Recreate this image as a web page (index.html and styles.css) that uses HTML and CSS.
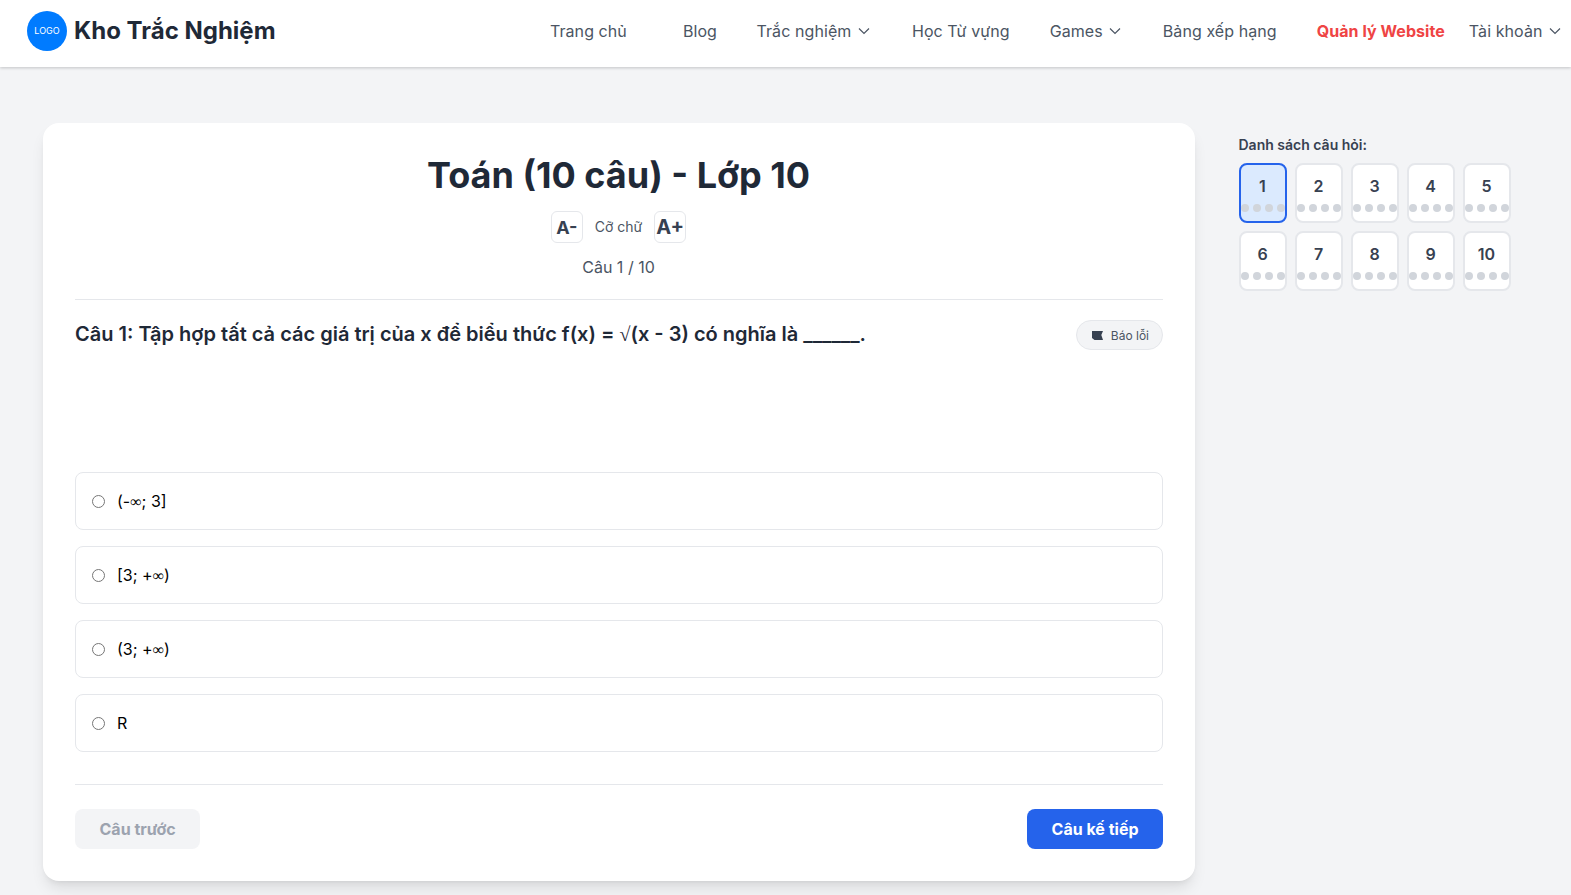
FILE: index.html
```html
<!DOCTYPE html>
<html lang="vi">
<head>
    <meta charset="UTF-8">
    <meta name="viewport" content="width=device-width, initial-scale=1.0">
    <title>Kho Trắc Nghiệm</title>
    <link rel="stylesheet" href="styles.css">
</head>
<body>
    <header class="site-header">
        <a class="brand" href="#">
            <span class="brand-logo">LOGO</span>
            <span class="brand-name">Kho Trắc Nghiệm</span>
        </a>
        <nav class="main-nav">
            <a class="nav-link nav-home" href="#">Trang chủ</a>
            <a class="nav-link nav-blog" href="#">Blog</a>
            <a class="nav-link nav-quiz" href="#">Trắc nghiệm
                <svg class="chevron" viewBox="0 0 12 12"><path d="M1 3.500l5 5 5-5"/></svg>
            </a>
            <a class="nav-link nav-vocab" href="#">Học Từ vựng</a>
            <a class="nav-link nav-games" href="#">Games
                <svg class="chevron" viewBox="0 0 12 12"><path d="M1 3.500l5 5 5-5"/></svg>
            </a>
            <a class="nav-link nav-rank" href="#">Bảng xếp hạng</a>
            <a class="nav-link nav-admin" href="#">Quản lý Website</a>
            <a class="nav-link nav-account" href="#">Tài khoản
                <svg class="chevron" viewBox="0 0 12 12"><path d="M1 3.500l5 5 5-5"/></svg>
            </a>
        </nav>
    </header>

    <main class="page">
        <section class="quiz-card">
            <h1 class="quiz-title">Toán (10 câu) - Lớp 10</h1>
            <div class="font-controls">
                <button class="font-btn font-smaller">A-</button>
                <span class="font-label">Cỡ chữ</span>
                <button class="font-btn font-bigger">A+</button>
            </div>
            <div class="quiz-progress">Câu 1 / 10</div>

            <div class="question-row">
                <div class="question-text">Câu 1: Tập hợp tất cả các giá trị của x để biểu thức f(x) = <span class="math">√</span>(x - 3) có nghĩa là ______.</div>
                <button class="report-btn">
                    <svg class="flag-icon" viewBox="0 0 11 9"><path d="M0 0h11L9.300 4 11 9H2.500L0 7z"/></svg>
                    Báo lỗi
                </button>
            </div>

            <div class="answers">
                <label class="answer"><input type="radio" name="q1"><span>(-<span class="math">∞</span>; 3]</span></label>
                <label class="answer"><input type="radio" name="q1"><span>[3; +<span class="math">∞</span>)</span></label>
                <label class="answer"><input type="radio" name="q1"><span>(3; +<span class="math">∞</span>)</span></label>
                <label class="answer"><input type="radio" name="q1"><span>R</span></label>
            </div>

            <div class="quiz-footer">
                <button class="btn btn-prev">Câu trước</button>
                <button class="btn btn-next">Câu kế tiếp</button>
            </div>
        </section>

        <aside class="question-panel">
            <div class="panel-title">Danh sách câu hỏi:</div>
            <div class="question-grid">
                <div class="q-tile active"><span class="q-num">1</span><div class="q-dots"><i></i><i></i><i></i><i></i></div></div>
                <div class="q-tile"><span class="q-num">2</span><div class="q-dots"><i></i><i></i><i></i><i></i></div></div>
                <div class="q-tile"><span class="q-num">3</span><div class="q-dots"><i></i><i></i><i></i><i></i></div></div>
                <div class="q-tile"><span class="q-num">4</span><div class="q-dots"><i></i><i></i><i></i><i></i></div></div>
                <div class="q-tile"><span class="q-num">5</span><div class="q-dots"><i></i><i></i><i></i><i></i></div></div>
                <div class="q-tile"><span class="q-num">6</span><div class="q-dots"><i></i><i></i><i></i><i></i></div></div>
                <div class="q-tile"><span class="q-num">7</span><div class="q-dots"><i></i><i></i><i></i><i></i></div></div>
                <div class="q-tile"><span class="q-num">8</span><div class="q-dots"><i></i><i></i><i></i><i></i></div></div>
                <div class="q-tile"><span class="q-num">9</span><div class="q-dots"><i></i><i></i><i></i><i></i></div></div>
                <div class="q-tile"><span class="q-num">10</span><div class="q-dots"><i></i><i></i><i></i><i></i></div></div>
            </div>
        </aside>
    </main>
</body>
</html>
```

FILE: styles.css
```css
* {
    box-sizing: border-box;
    margin: 0;
    padding: 0;
}

body {
    background-color: #f3f4f6;
    font-family: 'Inter', 'Liberation Sans', sans-serif;
    color: #1f2937;
}

a {
    text-decoration: none;
}

button {
    font-family: inherit;
    cursor: pointer;
}

.site-header {
    height: 67px;
    background-color: #fff;
    box-shadow: 0 1px 3px rgba(0, 0, 0, 0.2);
    display: flex;
    justify-content: space-between;
    align-items: center;
    padding: 0 10px 6px 27px;
}

.brand {
    display: flex;
    align-items: center;
    gap: 7px;
}

.brand-logo {
    width: 40px;
    height: 40px;
    border-radius: 50%;
    background-color: #007bff;
    color: #fff;
    font-size: 9px;
    display: flex;
    align-items: center;
    justify-content: center;
}

.brand-name {
    font-size: 24px;
    font-weight: 700;
    color: #1f2937;
}

.main-nav {
    display: flex;
    align-items: center;
}

.nav-link {
    font-size: 16px;
    letter-spacing: 0.08px;
    color: #4b5563;
    display: flex;
    align-items: center;
    gap: 6.500px;
}

.nav-home { margin-right: 56px; }
.nav-blog { margin-right: 39.500px; }
.nav-quiz { margin-right: 42px; }
.nav-vocab { margin-right: 40px; }
.nav-games { margin-right: 41.500px; }
.nav-rank { margin-right: 40px; }
.nav-admin { margin-right: 24px; color: #ef4444; font-weight: 700; letter-spacing: 0.05px; }

.chevron {
    width: 12px;
    height: 12px;
    fill: none;
    stroke: #4b5563;
    stroke-width: 1.200;
}

.page {
    display: flex;
    align-items: flex-start;
    gap: 43px;
    padding: 56px 0 15px 43px;
}

.quiz-card {
    width: 1152px;
    height: 758px;
    background-color: #fff;
    border-radius: 16px;
    padding: 32px;
    box-shadow: 0 10px 15px -3px rgba(0, 0, 0, 0.1), 0 4px 6px -4px rgba(0, 0, 0, 0.1);
    display: flex;
    flex-direction: column;
}

.quiz-title {
    font-size: 36px;
    line-height: 40px;
    font-weight: 700;
    color: #1f2937;
    text-align: center;
    padding-right: 1px;
}

.font-controls {
    display: flex;
    justify-content: center;
    align-items: center;
    gap: 12px;
    margin-top: 16px;
    padding-right: 1px;
}

.font-btn {
    width: 32px;
    height: 32px;
    background-color: #fff;
    border: 1px solid #e5e7eb;
    border-radius: 6px;
    color: #374151;
    font-weight: 700;
    display: flex;
    align-items: center;
    justify-content: center;
}

.font-smaller { font-size: 18px; }
.font-bigger { font-size: 20px; }

.font-label {
    font-size: 14px;
    color: #4b5563;
    padding-bottom: 2px;
}

.quiz-progress {
    text-align: center;
    font-size: 16px;
    line-height: 24px;
    color: #4b5563;
    margin-top: 12px;
    padding: 0 1px 20px 0;
    border-bottom: 1px solid #e5e7eb;
}

.question-row {
    display: flex;
    justify-content: space-between;
    align-items: flex-start;
    height: 173px;
    padding-top: 20px;
}

.question-text {
    font-size: 20px;
    line-height: 28px;
    font-weight: 600;
    color: #1f2937;
}

.math {
    font-family: 'Liberation Serif', serif;
    font-weight: 400;
}

.report-btn {
    height: 30px;
    padding: 0 13px 0 15px;
    background-color: #f3f4f6;
    border: 1px solid #e5e7eb;
    border-radius: 15px;
    font-size: 12px;
    color: #4b5563;
    display: flex;
    align-items: center;
    gap: 8px;
}

.flag-icon {
    width: 11px;
    height: 9px;
    fill: #374151;
}

.answers {
    display: flex;
    flex-direction: column;
    gap: 16px;
}

.answer {
    height: 58px;
    border: 1px solid #e5e7eb;
    border-radius: 8px;
    padding: 0 16px;
    display: flex;
    align-items: center;
    gap: 12px;
    font-size: 16px;
    color: #000;
}

.answer input {
    width: 13px;
    height: 13px;
}

.quiz-footer {
    display: flex;
    justify-content: space-between;
    margin-top: 32px;
    padding-top: 24px;
    border-top: 1px solid #e5e7eb;
}

.btn {
    height: 40px;
    border: none;
    border-radius: 8px;
    padding: 0 24.500px;
    font-size: 16px;
    font-weight: 700;
}

.btn-prev {
    background-color: #f3f4f6;
    color: #9ca3af;
}

.btn-next {
    background-color: #2563eb;
    color: #fff;
}

.question-panel {
    width: 272px;
}

.panel-title {
    font-size: 14px;
    line-height: 20px;
    font-weight: 600;
    color: #374151;
    margin: 12px 0 8px 0.500px;
}

.question-grid {
    display: grid;
    grid-template-columns: repeat(5, 48px);
    grid-auto-rows: 60px;
    gap: 8px;
    padding-left: 1px;
}

.q-tile {
    background-color: #fff;
    border: 2px solid #e5e7eb;
    border-radius: 8px;
    display: flex;
    flex-direction: column;
    align-items: center;
}

.q-tile.active {
    background-color: #dbeafe;
    border-color: #2563eb;
}

.q-num {
    font-size: 16px;
    line-height: 24px;
    font-weight: 600;
    color: #374151;
    margin: 9px 1px 0 0;
}

.q-dots {
    display: flex;
    gap: 4px;
    margin-top: 6px;
}

.q-dots i {
    width: 8px;
    height: 8px;
    border-radius: 50%;
    background-color: #d1d5db;
}
```
